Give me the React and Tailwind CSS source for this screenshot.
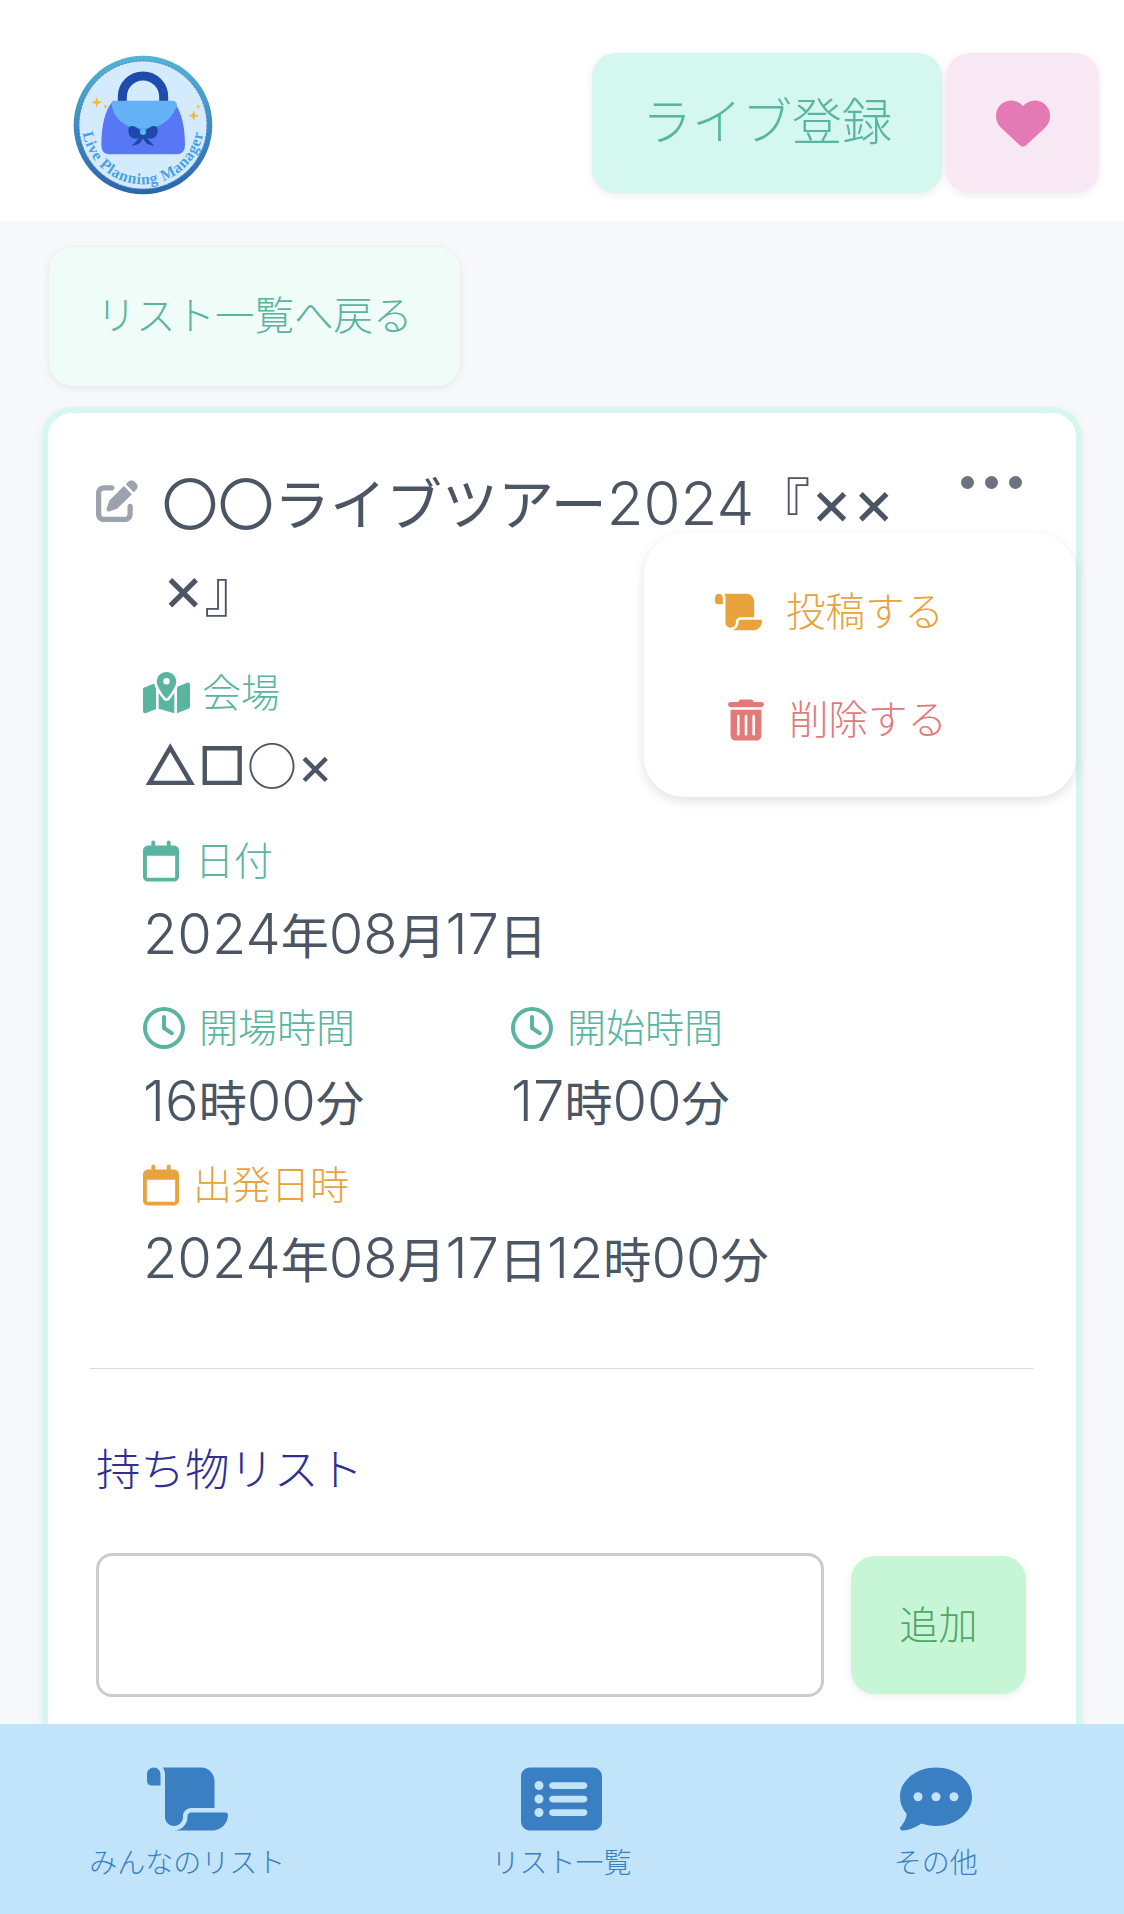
import {
  FaHeart,
  FaPenToSquare,
  FaScroll,
  FaTrashCan,
  FaMapLocationDot,
  FaRegCalendar,
  FaRegClock,
  FaRectangleList,
  FaCommentDots,
} from "react-icons/fa6";

function Logo() {
  return (
    <svg viewBox="100 75 420 420" className="w-[140px] h-[140px]">
      <defs>
        <linearGradient id="ring" x1="0" y1="0" x2="0" y2="1">
          <stop offset="0" stopColor="#53b5d6" />
          <stop offset="1" stopColor="#2a65a8" />
        </linearGradient>
        <path id="arc" d="M 127 280 A 183 183 0 0 0 493 280" />
      </defs>
      <circle cx="310" cy="285" r="208" fill="url(#ring)" />
      <circle cx="310" cy="285" r="192" fill="#d4ebfd" stroke="#4f7fd8" strokeWidth="3" strokeDasharray="8 3" />
      <path d="M248 215 V200 a62 62 0 0 1 124 0 V215" fill="none" stroke="#1f4bab" strokeWidth="27" />
      <path d="M220 213 H400 C425 240 436 290 436 345 Q436 373 410 373 H210 Q185 373 185 345 C185 290 195 240 220 213 Z" fill="#5877f5" />
      <path d="M222 212 H398 Q408 212 412 222 C400 270 360 296 310 296 C260 296 222 270 216 222 Q216 212 222 212 Z" fill="#65b1f8" />
      <path d="M310 312 C290 282 266 282 266 300 C266 322 280 330 298 324 L276 348 L298 342 L310 326 L322 342 L344 348 L322 324 C340 330 354 322 354 300 C354 282 330 282 310 312 Z" fill="#1d4aa9" />
      <circle cx="310" cy="306" r="9" fill="#4fc0e8" />
      <path d="M171 200 l4 13 13 4 -13 4 -4 13 -4 -13 -13 -4 13 -4 Z" fill="#f5b642" />
      <path d="M462 240 l4 13 13 4 -13 4 -4 13 -4 -13 -13 -4 13 -4 Z" fill="#f5b642" />
      <path d="M197 222 l2 6 6 2 -6 2 -2 6 -2 -6 -6 -2 6 -2 Z" fill="#f5b642" />
      <path d="M476 222 l2 6 6 2 -6 2 -2 6 -2 -6 -6 -2 6 -2 Z" fill="#f5b642" />
      <text fontFamily="'Liberation Serif', serif" fontWeight="700" fontSize="47" fill="#4a9fe8" letterSpacing="2">
        <textPath href="#arc" startOffset="50%" textAnchor="middle">Live Planning Manager</textPath>
      </text>
    </svg>
  );
}

function Label({ icon, color, gap, children }) {
  return (
    <div className={`flex items-center text-[39px] leading-[52px] ${color} ${gap}`}>
      {icon}
      <span>{children}</span>
    </div>
  );
}

// digits sit larger than the kana in the reference's font
function Value({ text }) {
  return (
    <p className="text-[48px] leading-[70px] mt-[15px] font-normal">
      {text.split(/(\d+)/).map((part, i) =>
        /\d/.test(part) ? (
          <span key={i} className="text-[56px] leading-none font-light">
            {part}
          </span>
        ) : (
          part
        )
      )}
    </p>
  );
}

function NavItem({ icon, label }) {
  return (
    <div className="flex flex-col items-center gap-[8px]">
      <div className="h-[72px] flex items-center justify-center">{icon}</div>
      <span className="text-[28px] leading-[40px]">{label}</span>
    </div>
  );
}

export default function App() {
  return (
    <div
      className="h-[1914px] overflow-hidden bg-[#f7f8fa] font-light text-[#4b5563]"
      style={{ fontFamily: "Inter, 'Noto Sans CJK JP', sans-serif" }}
    >
      <header className="h-[221px] bg-white flex items-center justify-between pl-[73px] pr-[25px] pt-[29px]">
        <Logo />
        <div className="flex gap-[4px] -mt-[5px]">
          <button className="w-[350px] h-[140px] rounded-[24px] bg-[#d4f7ef] text-[#5ab5a0] text-[50px] shadow-[0_2px_8px_rgba(0,0,0,0.08)]">
            ライブ登録
          </button>
          <button className="w-[153px] h-[140px] rounded-[24px] bg-[#f8e8f3] flex items-center justify-center shadow-[0_2px_8px_rgba(0,0,0,0.08)]">
            <FaHeart className="text-[#e47ab4] w-[54px] h-[54px]" />
          </button>
        </div>
      </header>

      <main className="px-[42px]">
        <button className="block ml-[7px] mt-[26px] w-[411px] h-[139px] rounded-[24px] bg-[#f0fcf8] text-[#5ab5a0] text-[39.5px] shadow-[0_2px_8px_rgba(0,0,0,0.08)]">
          リスト一覧へ戻る
        </button>

        <section className="relative mt-[21px] h-[1500px] rounded-[30px] border-[6px] border-[#d5f7ef] bg-white shadow-[0_2px_8px_rgba(0,0,0,0.06)] pt-[49px] pl-[48px] pr-[43px]">
          <div className="flex items-start">
            <FaPenToSquare className="text-[#9ca3af] w-[42px] h-[42px] mt-[18px] mr-[24px] shrink-0" />
            <h1 className="text-[56px] leading-[86px] w-[745px] font-normal">
              〇〇ライブツアー
              <span className="text-[60px] leading-none font-light">2024</span>『
              <span className="text-[64px] leading-none">××</span>
              <br />
              <span className="text-[64px] leading-none">×</span>』
            </h1>
          </div>

          <div className="absolute top-[63px] right-[54px] flex gap-[11px]">
            <span className="w-[13px] h-[13px] rounded-full bg-[#6b7280]" />
            <span className="w-[13px] h-[13px] rounded-full bg-[#6b7280]" />
            <span className="w-[13px] h-[13px] rounded-full bg-[#6b7280]" />
          </div>

          <div className="absolute left-[596px] top-[120px] w-[432px] h-[264px] rounded-[40px] bg-white shadow-[0_4px_12px_rgba(0,0,0,0.12)] flex flex-col justify-center gap-[56px] pt-[2px] text-[39.5px] leading-[52px]">
            <div className="flex items-center text-[#e8a33d] pl-[71px]">
              <FaScroll className="w-[47px] h-[42px] mr-[24px]" />
              <span>投稿する</span>
            </div>
            <div className="flex items-center text-[#e27a7a] pl-[84px]">
              <FaTrashCan className="w-[36px] h-[42px] mr-[25px]" />
              <span>削除する</span>
            </div>
          </div>

          <div className="pl-[47px] mt-[33px]">
            <Label color="text-[#5ab5a0]" gap="gap-[12px]" icon={<FaMapLocationDot className="w-[47px] h-[42px]" />}>
              会場
            </Label>
            <p className="text-[54px] leading-[70px] mt-[12px] font-normal">
              △□
              <span className="text-[50px] leading-none font-['Noto_Sans_CJK_JP']">○</span>
              <span className="text-[55px] leading-none">×</span>
            </p>

            <div className="mt-[34px]">
              <Label color="text-[#5ab5a0]" gap="gap-[16px]" icon={<FaRegCalendar className="w-[36px] h-[42px]" />}>
                日付
              </Label>
              <Value text="2024年08月17日" />
            </div>

            <div className="flex mt-[30px]">
              <div className="w-[368px]">
                <Label color="text-[#5ab5a0]" gap="gap-[14px]" icon={<FaRegClock className="w-[42px] h-[42px]" />}>
                  開場時間
                </Label>
                <Value text="16時00分" />
              </div>
              <div>
                <Label color="text-[#5ab5a0]" gap="gap-[14px]" icon={<FaRegClock className="w-[42px] h-[42px]" />}>
                  開始時間
                </Label>
                <Value text="17時00分" />
              </div>
            </div>

            <div className="mt-[20px]">
              <Label color="text-[#e8a33d]" gap="gap-[14px]" icon={<FaRegCalendar className="w-[36px] h-[42px]" />}>
                出発日時
              </Label>
              <Value text="2024年08月17日12時00分" />
            </div>
          </div>

          <hr className="border-[#d9d9d9] mt-[72px] -ml-[6px]" />

          <h2 className="text-[44.5px] leading-[66px] text-[#312e91] mt-[68px]">持ち物リスト</h2>

          <div className="flex items-center gap-[27px] mt-[50px]">
            <input className="w-[728px] h-[144px] rounded-[16px] border-[3px] border-[#cccccc] bg-white" />
            <button className="w-[175px] h-[138px] rounded-[24px] bg-[#c6f6d5] text-[#4fa868] text-[39px] shadow-[0_2px_8px_rgba(0,0,0,0.08)]">
              追加
            </button>
          </div>
        </section>
      </main>

      <nav className="fixed bottom-0 left-0 right-0 h-[190px] bg-[#c2e4fa] text-[#3a7fc1] grid grid-cols-3 justify-items-center items-start pt-[39px] pr-[1px]">
        <NavItem icon={<FaScroll className="w-[81px] h-[72px]" />} label="みんなのリスト" />
        <NavItem icon={<FaRectangleList className="w-[81px] h-[72px]" />} label="リスト一覧" />
        <NavItem icon={<FaCommentDots className="w-[72px] h-[72px]" />} label="その他" />
      </nav>
    </div>
  );
}
